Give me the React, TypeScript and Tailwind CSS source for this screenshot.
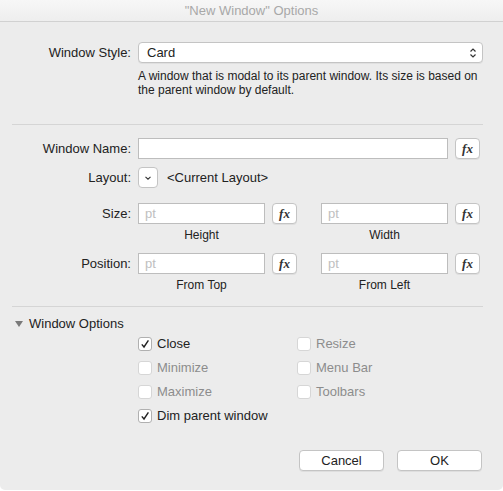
import React from "react";

const font = { fontFamily: '"Helvetica Neue", "Liberation Sans", Arial, sans-serif' };

function Fx() {
  return (
    <button className="flex h-[21px] w-[25px] shrink-0 items-center justify-center rounded-[4px] border border-[#c4c4c4] bg-white shadow-[0_1px_0_rgba(0,0,0,0.06)]">
      <span className="text-[13px] font-bold italic leading-none text-[#333]" style={{ fontFamily: '"Liberation Serif", serif' }}>
        fx
      </span>
    </button>
  );
}

function PtField({ caption }: { caption: string }) {
  return (
    <div className="flex flex-col">
      <div className="flex items-center gap-[7px]">
        <div className="flex h-[21px] w-[127px] items-center border border-[#bdbdbd] bg-white px-[6px] text-[13px] text-[#c0c0c0]">
          pt
        </div>
        <Fx />
      </div>
      <div className="mt-[4px] w-[127px] text-center text-[12px] leading-[14px] text-[#222]">{caption}</div>
    </div>
  );
}

function Check({ label, checked, disabled }: { label: string; checked?: boolean; disabled?: boolean }) {
  return (
    <div className="flex h-[24px] items-center gap-[5px]">
      <span
        className={`flex h-[14px] w-[14px] items-center justify-center rounded-[3px] border bg-white ${
          disabled ? "border-[#d6d6d6]" : "border-[#b0b0b0]"
        }`}
      >
        {checked && (
          <svg width="10" height="10" viewBox="0 0 10 10">
            <path d="M1.8 5.4 L4 8 L8.4 1.4" fill="none" stroke="#222" strokeWidth="1.4" />
          </svg>
        )}
      </span>
      <span className={`text-[13px] ${disabled ? "text-[#8c8c8c]" : "text-[#222]"}`}>{label}</span>
    </div>
  );
}

export default function App() {
  return (
    <div className="h-[491px] w-[503px] bg-white" style={font}>
      <div className="flex h-[490px] w-[503px] flex-col rounded-b-[5px] bg-[#ececec]">
        <div className="flex h-[22px] items-center justify-center border-b border-[#d1d1d1] bg-gradient-to-b from-[#f7f7f7] to-[#eeeeee] text-[13px] text-[#a8a8a8]">
          "New Window" Options
        </div>

        <div className="pl-[12px] pr-[20px]">
          <div className="mt-[20px] flex items-center">
            <div className="w-[126px] pr-[7px] text-right text-[13px] text-[#222]">Window Style:</div>
            <div className="flex h-[21px] flex-1 items-center justify-between rounded-[4px] border border-[#c4c4c4] bg-white pl-[8px] pr-[5px] text-[13px] text-[#222] shadow-[0_1px_0_rgba(0,0,0,0.05)]">
              <span>Card</span>
              <svg width="8" height="12" viewBox="0 0 8 12">
                <path d="M1.5 4.5 L4 2 L6.5 4.5 M1.5 7.5 L4 10 L6.5 7.5" fill="none" stroke="#333" strokeWidth="1.2" />
              </svg>
            </div>
          </div>
          <div className="ml-[126px] mt-[6px] text-[12px] leading-[14px] text-[#222]">
            A window that is modal to its parent window. Its size is based on
            <br />
            the parent window by default.
          </div>

          <div className="mt-[27px] border-t border-[#d5d5d5]" />

          <div className="mt-[13px] flex items-center">
            <div className="w-[126px] pr-[7px] text-right text-[13px] text-[#222]">Window Name:</div>
            <div className="h-[21px] w-[310px] border border-[#bdbdbd] bg-white" />
            <div className="ml-[7px]">
              <Fx />
            </div>
          </div>

          <div className="mt-[8px] flex items-center">
            <div className="w-[126px] pr-[7px] text-right text-[13px] text-[#222]">Layout:</div>
            <button className="flex h-[21px] w-[20px] items-center justify-center rounded-[4px] border border-[#c4c4c4] bg-white">
              <svg width="8" height="6" viewBox="0 0 8 6">
                <path d="M1.5 1.8 L4 4.2 L6.5 1.8" fill="none" stroke="#333" strokeWidth="1.1" />
              </svg>
            </button>
            <span className="ml-[9px] text-[13px] text-[#222]">&lt;Current Layout&gt;</span>
          </div>

          <div className="mt-[15px] flex items-start">
            <div className="flex h-[21px] w-[126px] items-center justify-end pr-[7px] text-[13px] text-[#222]">Size:</div>
            <PtField caption="Height" />
            <div className="ml-[24px]">
              <PtField caption="Width" />
            </div>
          </div>

          <div className="mt-[11px] flex items-start">
            <div className="flex h-[21px] w-[126px] items-center justify-end pr-[7px] text-[13px] text-[#222]">Position:</div>
            <PtField caption="From Top" />
            <div className="ml-[24px]">
              <PtField caption="From Left" />
            </div>
          </div>

          <div className="mt-[14px] border-t border-[#d5d5d5]" />

          <div className="mt-[7px] flex items-center">
            <svg width="10" height="8" viewBox="0 0 10 8" className="ml-[2px]">
              <path d="M1 1 L9 1 L5 7 Z" fill="#7a7a7a" />
            </svg>
            <span className="ml-[5px] text-[13px] text-[#222]">Window Options</span>
          </div>

          <div className="ml-[126px] mt-[-2px] flex">
            <div className="flex w-[159px] flex-col">
              <Check label="Close" checked />
              <Check label="Minimize" disabled />
              <Check label="Maximize" disabled />
              <Check label="Dim parent window" checked />
            </div>
            <div className="flex flex-col">
              <Check label="Resize" disabled />
              <Check label="Menu Bar" disabled />
              <Check label="Toolbars" disabled />
            </div>
          </div>

          <div className="mt-[22px] flex justify-end gap-[13px] pr-[1px]">
            <button className="h-[21px] w-[85px] rounded-[4px] border border-[#c4c4c4] bg-white text-[13px] text-[#222] shadow-[0_1px_0_rgba(0,0,0,0.06)]">
              Cancel
            </button>
            <button className="h-[21px] w-[85px] rounded-[4px] border border-[#c4c4c4] bg-white text-[13px] text-[#222] shadow-[0_1px_0_rgba(0,0,0,0.06)]">
              OK
            </button>
          </div>
        </div>
      </div>
    </div>
  );
}
